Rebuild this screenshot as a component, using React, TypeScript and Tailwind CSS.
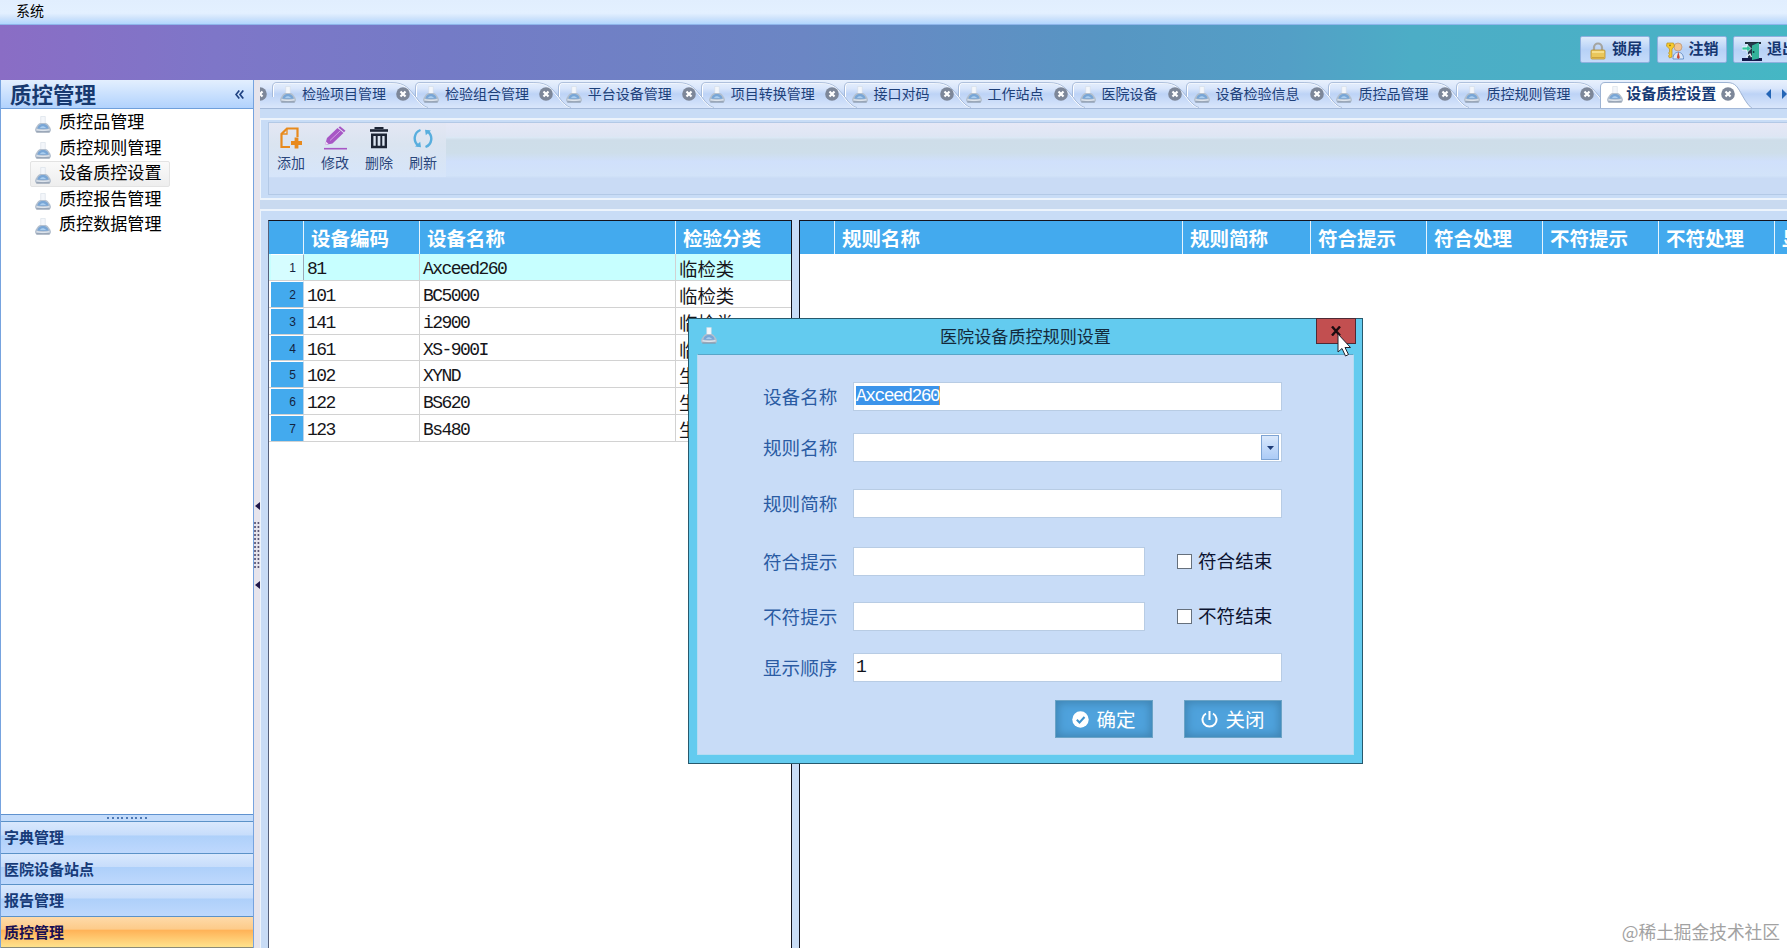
import { ReactNode, useState } from "react";

const menuItems = ["质控品管理", "质控规则管理", "设备质控设置", "质控报告管理", "质控数据管理"];

const groups = ["字典管理", "医院设备站点", "报告管理", "质控管理"];

const tabs = [
  { label: "检验项目管理", width: 142.9 },
  { label: "检验组合管理", width: 142.9 },
  { label: "平台设备管理", width: 142.9 },
  { label: "项目转换管理", width: 142.9 },
  { label: "接口对码", width: 114 },
  { label: "工作站点", width: 114 },
  { label: "医院设备", width: 114 },
  { label: "设备检验信息", width: 142.9 },
  { label: "质控品管理", width: 128 },
  { label: "质控规则管理", width: 142.9 },
];

const devices = [
  { code: "81", name: "Axceed260", type: "临检类" },
  { code: "101", name: "BC5000", type: "临检类" },
  { code: "141", name: "i2900", type: "临检类" },
  { code: "161", name: "XS-900I", type: "临检类" },
  { code: "102", name: "XYND", type: "生化类" },
  { code: "122", name: "BS620", type: "生化类" },
  { code: "123", name: "Bs480", type: "生化类" },
];

const FlaskIcon = ({ className = "" }: { className?: string }) => (
  <svg viewBox="0 0 16 17" className={`w-4 h-[17px] shrink-0 ${className}`}>
    <path d="M5.700 .5h4.600v7h-4.600z" fill="#f3f6fa" stroke="#cfd8e3" strokeWidth="0.500" />
    <path d="M5 7h6c2.500 1 4 4 4.800 6 .5 2-.5 3.300-2.300 3.300h-11C.7 16.300-.3 15 .2 13 1 11 2.500 8 5 7z" fill="#b3bfce" />
    <path d="M2.500 12.800c0-3 2.500-4.800 5.500-4.800s5.500 1.800 5.500 4.800z" fill="#79a6d6" />
    <path d="M5 12c1-2.500 4.500-2.500 6 0z" fill="#a9cdef" />
    <path d="M1.500 13.700c3 1 10 1 13 0" stroke="#dde4ec" strokeWidth="1.400" fill="none" />
    <path d="M1.300 16h13.400" stroke="#7f8da1" strokeWidth="1" />
  </svg>
);

const TabClose = () => (
  <svg viewBox="0 0 14 14" className="w-3.5 h-3.5 shrink-0">
    <circle cx="7" cy="7" r="6.800" fill="#7d8799" />
    <path d="M4.500 4.500l5 5M9.500 4.500l-5 5" stroke="#fff" strokeWidth="2.200" />
  </svg>
);

const Tab = ({ label, width, z }: { label: string; width: number; z: number }) => (
  <div className="relative flex items-start h-7 pl-2 shrink-0" style={{ width, zIndex: z }}>
    <svg className="absolute left-0 top-0 h-7 w-full overflow-visible" fill="none">
      <path
        d={`M1.500 17V7Q1.500 3 6 3H${width - 24}C${width - 10} 3 ${width - 7} 9 ${width} 17Q${width + 6} 26 ${width + 12} 27.500`}
        stroke="#fff"
      />
      <path
        d={`M.5 17V7Q.5 2.500 5 2.500H${width - 24}C${width - 9} 2.500 ${width - 6} 9 ${width + 1} 17Q${width + 7} 26 ${width + 13} 27.500`}
        stroke="#9db3d3"
        strokeWidth="0.800"
      />
    </svg>
    <FlaskIcon className="relative mt-[6px]" />
    <span className="relative ml-1.5 mt-[3px] text-[14px] leading-5 text-[#1d4079] whitespace-nowrap">{label}</span>
    <span className="relative ml-[10px] mt-[7px]">
      <TabClose />
    </span>
  </div>
);

const BannerButton = ({ icon, label }: { icon: ReactNode; label: string }) => (
  <button className="flex items-start w-[70px] h-[27px] shrink-0 pl-[8px] pt-[2px] gap-[5px] rounded-[2px] border border-[#8fb0df] bg-linear-to-b from-[#deebfb] via-[#b7d1f6] to-[#c5dbfa]">
    <span className="mt-[3px]">{icon}</span>
    <span className="text-[15px] leading-[18px] font-bold text-[#153670] whitespace-nowrap">{label}</span>
  </button>
);

const LockIcon = () => (
  <svg viewBox="0 0 18 18" className="w-[18px] h-[18px]">
    <path d="M5 9V5.500a4 4 0 0 1 8 0V9" stroke="#a5a5a0" strokeWidth="2.200" fill="none" />
    <rect x="2" y="8" width="14" height="9" rx="1" fill="#eac75c" stroke="#b68f33" strokeWidth="0.800" />
    <path d="M3 10h12" stroke="#fae69a" strokeWidth="1.500" />
    <path d="M3 15.500h12" stroke="#cfa23c" />
  </svg>
);

const KeyUserIcon = () => (
  <svg viewBox="0 0 18 18" className="w-[18px] h-[18px]">
    <circle cx="12" cy="5" r="4" fill="#f0c493" stroke="#bb9275" strokeWidth="0.700" />
    <path d="M7 17c-.5-9 11-9 10.500 0z" fill="#dce7f6" stroke="#6d95cc" strokeWidth="1" />
    <path d="M12.300 9.500l1.500 6-1.500 1.500-1.500-1.500z" fill="#cb4a35" />
    <path d="M1 1h6.500l1 3-2.500 3v8l-2.500 1-1-2 1-1.500-1-1.500 1-1V7L.5 4z" fill="#f6cb2c" stroke="#b88d21" strokeWidth="0.700" />
    <circle cx="4" cy="3.300" r="0.900" fill="#8e6b1a" />
  </svg>
);

const ExitIcon = () => (
  <svg viewBox="0 0 20 19" className="w-5 h-[19px]">
    <path d="M3 0h16v2H3z" fill="#1d2c3a" />
    <path d="M6 1h10v16H6z" fill="#23384a" />
    <path d="M0 16h20v3H0z" fill="#12194a" />
    <path d="M10 3.500l7-3v16l-7 1.500z" fill="#33b39a" />
    <path d="M0 5h5V2.500l4 4-4 4V8H0z" fill="#35c3a0" stroke="#fff" strokeWidth="0.700" />
    <path d="M4 15l4-3 1.500 3" stroke="#e8eef2" fill="none" strokeWidth="1.300" />
    <circle cx="11.600" cy="10" r="0.900" fill="#0e3a3c" />
  </svg>
);

const AddIcon = () => (
  <svg viewBox="0 0 22 22" className="w-[22px] h-[22px]" fill="none" stroke="#e88a1d" strokeWidth="2.200">
    <path d="M10 20H1.500V7L7 1.500h10.500V10" />
    <path d="M7 1.500V7H1.500" strokeWidth="1.300" />
    <path d="M16.500 10.500v11M11 16h11" strokeWidth="3.800" />
  </svg>
);

const EditIcon = () => (
  <svg viewBox="0 0 24 24" className="w-6 h-6">
    <path d="M2 19l2-7L14.500 2l6 5L9.500 17.500z" fill="#a757c5" />
    <path d="M15.500 1.500l1.500-1.300 5.500 4.500-1.500 1.500z" fill="#a757c5" />
    <path d="M7 14.500L17 5" stroke="#d7a7e6" strokeWidth="0.900" />
    <path d="M2 19l1-3.500 2.500 2.500z" fill="#f0e0f6" />
    <path d="M1 22.700h23" stroke="#a757c5" strokeWidth="1.600" />
  </svg>
);

const DeleteIcon = () => (
  <svg viewBox="0 0 20 22" className="w-5 h-[22px]" fill="none" stroke="#1c2434">
    <path d="M1 3.500h18" strokeWidth="2.600" />
    <path d="M6.500 2V1h7v1" strokeWidth="2" />
    <path d="M3.200 7.800h13.600V20H3.200z" strokeWidth="2.400" />
    <path d="M7.700 8v12M12.300 8v12" strokeWidth="1.900" />
  </svg>
);

const RefreshIcon = () => (
  <svg viewBox="0 0 20 21" className="w-5 h-[21px]" fill="none" stroke="#58aede" strokeWidth="2.400">
    <path d="M7.500 2C1 4.500-.5 13 5.500 17.800" />
    <path d="M12.500 19C19 16.500 20.500 8 14.500 3.200" />
    <path d="M2 18.500l6 .8-.8-5.500z" fill="#58aede" stroke="none" />
    <path d="M18 2.500l-6-.8.8 5.500z" fill="#58aede" stroke="none" />
  </svg>
);

const tools = [
  { label: "添加", icon: <AddIcon /> },
  { label: "修改", icon: <EditIcon /> },
  { label: "删除", icon: <DeleteIcon /> },
  { label: "刷新", icon: <RefreshIcon /> },
];

const HeadCell = ({ children, className = "" }: { children?: ReactNode; className?: string }) => (
  <div
    className={`h-[33px] pl-[7px] pt-px shrink-0 flex items-center border-r border-[#e6f4fd] text-white text-[19.500px] font-bold whitespace-nowrap overflow-hidden ${className}`}
  >
    {children}
  </div>
);

const Sidebar = () => (
  <aside className="w-[254px] shrink-0 flex flex-col border-l border-r border-[#76a3df] bg-white">
    <div className="h-[29px] flex items-start justify-between pl-[9px] pr-[9px] border-b border-[#6f9fdb] bg-linear-to-b from-[#e3effe] to-[#b1d2fd]">
      <span className="text-[21.500px] leading-[27px] font-bold text-[#17396f]">质控管理</span>
      <svg viewBox="0 0 9 9" className="mt-[10px] w-[9px] h-[9px]" fill="none" stroke="#1f4282" strokeWidth="1.700">
        <path d="M4.300 .5L1 4.500l3.300 4M8.300 .5L5 4.500l3.300 4" />
      </svg>
    </div>
    <ul className="flex-1 pt-px">
      {menuItems.map((item, i) => (
        <li key={item} className="h-[25.600px] pl-[29px]">
          <div
            className={`flex items-start h-[26px] w-[140px] pl-1 border ${
              i === 2 ? "border-[#e3e3e3] bg-linear-to-b from-[#fafafa] to-[#eeeeee] rounded-[2px]" : "border-transparent"
            }`}
          >
            <FlaskIcon className="mt-[5px]" />
            <span className="ml-[8px] text-[17.100px] leading-5 whitespace-nowrap text-black">{item}</span>
          </div>
        </li>
      ))}
    </ul>
    <div className="h-[7px] flex items-center justify-center gap-[2.700px] border-t border-[#5f92cf] bg-[#c4dcfb]">
      {Array.from({ length: 9 }, (_, i) => (
        <span key={i} className="w-0.5 h-0.5 bg-[#4d78b4]" />
      ))}
    </div>
    {groups.map((group, i) => (
      <div
        key={group}
        className={`h-[31.400px] pl-[3px] border-t border-[#5b92c8] text-[15px] leading-[30px] font-bold ${
          i === 3
            ? "text-[#190f52] bg-[linear-gradient(#fedaa9_0%,#fdcb8a_40%,#ffb358_45%,#ffe28c_100%)]"
            : "text-[#173b78] bg-[linear-gradient(#d9e8fd_0%,#c7ddfb_42%,#aed0fa_45%,#bed8fd_100%)]"
        }`}
      >
        {group}
      </div>
    ))}
    <div className="h-px bg-[#8a8a78]" />
  </aside>
);

const Splitter = () => (
  <div className="w-[7px] -mr-px shrink-0 flex flex-col items-center justify-center gap-3 pt-[63px] bg-[#e6e4ec] border-r border-white">
    <svg viewBox="0 0 5 8" className="w-[5px] h-2">
      <path d="M5 0v8L0 4z" fill="#20184a" />
    </svg>
    <div className="w-[7px] h-[47px] bg-[radial-gradient(circle_at_1px_1px,#4a4668_0.700px,transparent_0.900px)] bg-size-[3.500px_4px]" />
    <svg viewBox="0 0 5 8" className="w-[5px] h-2">
      <path d="M5 0v8L0 4z" fill="#20184a" />
    </svg>
  </div>
);

const TabBar = () => (
  <div className="h-[29px] flex overflow-hidden border-b border-[#a3b8d8] bg-[linear-gradient(#e9f1fd_0%,#d9e6fb_30%,#bdd3f6_50%,#d9e6fb_100%)]">
    <div className="w-[12px] shrink-0 flex justify-end pr-[5px] pt-[7px] overflow-hidden">
      <TabClose />
    </div>
    {tabs.map((tab, i) => (
      <Tab key={tab.label} label={tab.label} width={tab.width} z={20 - i} />
    ))}
    <div className="relative z-30 flex items-start h-7 w-[154px] ml-px pl-[7px] shrink-0">
      <svg className="absolute left-0 top-0 h-[29px] w-full overflow-visible">
        <path d="M.5 29V7Q.5 2.500 5 2.500H127C136 2.500 138 8 142 15Q148 26 153 29" fill="#fff" stroke="#9db3d3" />
      </svg>
      <FlaskIcon className="relative mt-[6px]" />
      <span className="relative ml-[3px] mt-[3px] text-[15px] leading-5 font-bold text-[#163a75] whitespace-nowrap">
        设备质控设置
      </span>
      <span className="relative ml-[5px] mt-[7px]">
        <TabClose />
      </span>
    </div>
    <div className="flex items-center gap-[11px] pl-3 shrink-0">
      <svg viewBox="0 0 5 10" className="w-[5px] h-2.5">
        <path d="M5 0v10L0 5z" fill="#2465b5" />
      </svg>
      <svg viewBox="0 0 5 10" className="w-[5px] h-2.5">
        <path d="M0 0v10l5-5z" fill="#2465b5" />
      </svg>
    </div>
  </div>
);

const Toolbar = () => (
  <div className="h-[82px] pt-[2px] pl-[7px] border-t-2 border-b-2 border-l border-[#edf4fc] bg-[#c8dcf6]">
    <div className="h-[73px] flex border border-r-0 border-[#b3c9e6] bg-[linear-gradient(#e6e8f6_0%,#dee6f4_19%,#dce9f6_20%,#cedde9_24%,#cedeea_42%,#d0e0fb_54%,#d2e3f9_74%,#c9dbf5_78%,#c9dbf5_100%)]">
      <div className="flex h-[54px] pt-[3px] w-[177px] bg-[linear-gradient(#e4e7f4,#dae4f0_40%,#d6e5fa)]">
        {tools.map((tool) => (
          <button key={tool.label} className="w-11 flex flex-col items-center shrink-0">
            <span className="h-6 flex items-center">{tool.icon}</span>
            <span className="mt-[2px] text-[14px] leading-5 text-[#2a467b]">{tool.label}</span>
          </button>
        ))}
      </div>
    </div>
  </div>
);

const DeviceTable = () => (
  <div className="w-[524px] shrink-0 border border-b-0 border-[#14141e] border-l-[#55607a] bg-white">
    <div className="flex bg-[#43aaee]">
      <HeadCell className="w-[35px]" />
      <HeadCell className="w-[116px]">设备编码</HeadCell>
      <HeadCell className="w-[256px]">设备名称</HeadCell>
      <HeadCell className="w-[115px] border-r-0">检验分类</HeadCell>
    </div>
    {devices.map((device, i) => (
      <div
        key={device.code}
        className={`flex h-[26.850px] border-b border-[#d2d2d2] text-[18px] tracking-[-1.550px] leading-[31px] text-[#16161a] ${
          i === 0 ? "bg-[#c7ffff]" : "bg-white"
        }`}
      >
        <div
          className={`w-[33px] ml-0.5 pr-[7px] shrink-0 border-r border-t text-right font-['Liberation_Sans',sans-serif] text-[12px] tracking-normal leading-[27px] text-[#13233f] ${
            i === 0 ? "border-r-[#9aa8b8] border-t-white bg-[#d6fdff]" : "border-r-[#bcd4ea] border-t-white bg-[#43aaee]"
          }`}
        >
          {i + 1}
        </div>
        <div className="w-[116px] pl-[3px] shrink-0 border-r border-[#d2d2d2] font-['Liberation_Mono',monospace]">{device.code}</div>
        <div className="w-[256px] pl-[3px] shrink-0 border-r border-[#d2d2d2] font-['Liberation_Mono',monospace]">{device.name}</div>
        <div className="pl-[3px] text-[18.400px] tracking-normal leading-[28px]">{device.type}</div>
      </div>
    ))}
  </div>
);

const RuleTable = () => (
  <div className="flex-1 min-w-0 border border-b-0 border-r-0 border-[#14141e] bg-white">
    <div className="flex overflow-hidden bg-[#43aaee]">
      <HeadCell className="w-[35px]" />
      <HeadCell className="w-[348px]">规则名称</HeadCell>
      <HeadCell className="w-[128px]">规则简称</HeadCell>
      <HeadCell className="w-[116px]">符合提示</HeadCell>
      <HeadCell className="w-[116px]">符合处理</HeadCell>
      <HeadCell className="w-[116px]">不符提示</HeadCell>
      <HeadCell className="w-[116px]">不符处理</HeadCell>
      <HeadCell className="w-[116px]">显示顺序</HeadCell>
    </div>
  </div>
);

const inputClass = "h-[29px] border border-[#b8cce4] bg-white outline-none pl-[2px] pb-0.5 font-['Liberation_Mono',monospace] text-[18px] tracking-[-1.550px] text-[#10131c]";

const FieldRow = ({ label, className, children }: { label: string; className: string; children: ReactNode }) => (
  <div className={`flex items-center h-[29px] ${className}`}>
    <span className="w-[90px] shrink-0 text-[18.600px] leading-[27px] pb-0.5 text-[#2a5ba3] whitespace-nowrap">{label}</span>
    {children}
  </div>
);

const Checkbox = ({ label }: { label: string }) => {
  const [checked, setChecked] = useState(false);
  return (
    <label className="ml-8 flex items-center gap-[6px] text-[18.600px] text-[#0c1330] leading-[28px] whitespace-nowrap">
      <input
        type="checkbox"
        checked={checked}
        onChange={() => setChecked(!checked)}
        className="appearance-none w-[15px] h-[15px] border border-[#66707c] bg-white checked:bg-[#43aaee]"
      />
      <span className="pb-[3px]">{label}</span>
    </label>
  );
};

const DialogButton = ({ icon, label }: { icon: ReactNode; label: string }) => (
  <button className="w-[98px] h-[38px] flex items-center justify-center gap-[7px] border border-[#6ba3c6] bg-[#4fa2dc] shadow-[inset_0_0_9px_2px_#3f84b2] text-white text-[19.500px] leading-[30px] whitespace-nowrap">
    {icon}
    {label}
  </button>
);

const RuleDialog = () => (
  <div className="absolute left-[688px] top-[318px] z-40 w-[675px] h-[446px] flex flex-col border border-[#27596d] bg-[#63cbef] px-2 pb-2">
    <div className="relative h-[35px] shrink-0 flex items-center justify-center pb-0.5">
      <FlaskIcon className="absolute left-1 top-2" />
      <span className="text-[17.100px] leading-6 text-[#132a3c]">医院设备质控规则设置</span>
      <button className="absolute right-[-2px] top-[-1px] w-10 h-[26px] flex items-center justify-center border border-[#4d2a35] bg-[#c24f50]">
        <svg viewBox="0 0 10 10" className="w-2.5 h-2.5" stroke="#1b0c10" strokeWidth="2.400">
          <path d="M1 .5l8 9M9 .5l-8 9" />
        </svg>
      </button>
    </div>
    <div className="flex-1 pl-[65px] pt-[27px] border border-[#b4dcf2] border-t-[#58a6c8] bg-[#c8dcf7]">
      <FieldRow label="设备名称" className="">
        <div className={`w-[429px] ${inputClass}`}>
          <span className="inline-block h-[19px] mt-[3px] leading-[21px] align-top bg-[#3c94ea] text-white border-r border-[#d99a4e]">
            Axceed260
          </span>
        </div>
      </FieldRow>
      <FieldRow label="规则名称" className="mt-[22px]">
        <div className={`w-[429px] flex justify-end p-0.5 !pb-0.5 ${inputClass}`}>
          <span className="w-[18px] h-[25px] -mt-px flex items-center justify-center border border-[#7ea4d4] bg-linear-to-b from-[#d9e8fc] to-[#accbf6]">
            <svg viewBox="0 0 7 4" className="w-[7px] h-1">
              <path d="M0 0h7L3.500 4z" fill="#1f3d78" />
            </svg>
          </span>
        </div>
      </FieldRow>
      <FieldRow label="规则简称" className="mt-[27px]">
        <input className={`w-[429px] ${inputClass}`} />
      </FieldRow>
      <FieldRow label="符合提示" className="mt-[29px]">
        <input className={`w-[292px] ${inputClass}`} />
        <Checkbox label="符合结束" />
      </FieldRow>
      <FieldRow label="不符提示" className="mt-[26px]">
        <input className={`w-[292px] ${inputClass}`} />
        <Checkbox label="不符结束" />
      </FieldRow>
      <FieldRow label="显示顺序" className="mt-[22px]">
        <input className={`w-[429px] ${inputClass}`} defaultValue="1" />
      </FieldRow>
      <div className="mt-[18px] flex gap-[31px] pl-[292px]">
        <DialogButton
          label="确定"
          icon={
            <svg viewBox="0 0 17 17" className="w-[17px] h-[17px]">
              <circle cx="8.500" cy="8.500" r="8.200" fill="#fff" />
              <path d="M4.800 8.800l2.700 2.700 5-5.500" stroke="#3f93cd" strokeWidth="2" fill="none" />
            </svg>
          }
        />
        <DialogButton
          label="关闭"
          icon={
            <svg viewBox="0 0 17 17" className="w-[17px] h-[17px]" fill="none" stroke="#fff" strokeWidth="2">
              <path d="M5 2.500a7 7 0 1 0 7 0M8.500 0v9" />
            </svg>
          }
        />
      </div>
    </div>
  </div>
);

export default function App() {
  return (
    <div className="relative w-[1787px] h-[948px] overflow-hidden flex flex-col bg-[#c8dcf6] font-['Noto_Sans_CJK_SC',sans-serif]">
      {/* Menu bar */}
      <div className="h-[25px] shrink-0 pl-4 border-b border-[#8eb5ea] bg-[linear-gradient(#e1eefe_0%,#e3f0ff_55%,#cfe3fb_75%,#b1d6fe_100%)] text-[14px] leading-[21px] text-black">
        系统
      </div>

      {/* Banner */}
      <div className="h-[55px] shrink-0 flex pt-[11px] pl-[1580px] gap-[6.500px] overflow-hidden bg-[linear-gradient(90deg,#8a6dc5_0%,#7e76c8_12%,#747bc6_25%,#6b86c4_45%,#5796c3_62%,#539fc6_72%,#4cadc6_79%,#4ab1c6_93%,#45b7c4_100%)]">
        <BannerButton icon={<LockIcon />} label="锁屏" />
        <BannerButton icon={<KeyUserIcon />} label="注销" />
        <BannerButton icon={<ExitIcon />} label="退出" />
      </div>

      <div className="flex flex-1 min-h-0">
        <Sidebar />
        <Splitter />
        <main className="flex-1 min-w-0 flex flex-col bg-[#c8dcf6]">
          <TabBar />
          <div className="h-[9px] shrink-0" />
          <Toolbar />
          <div className="h-[9px] shrink-0 bg-[#c9daf0]" />
          <div className="flex flex-1 min-h-0 pl-[7px] pt-[9px] gap-[7px] border-t-2 border-l border-[#edf4fc]">
            <DeviceTable />
            <RuleTable />
          </div>
        </main>
      </div>

      <RuleDialog />

      {/* Mouse pointer */}
      <svg viewBox="0 0 15 24" className="absolute z-50 left-[1337px] top-[333px] w-[15px] h-6">
        <path d="M1 1v18l4-3.500 3.500 7.500 3-1.500L8 14.500h5.500z" fill="#fff" stroke="#22222e" />
      </svg>

      <div className="absolute right-[7px] bottom-[5px] text-[17.700px] leading-6 text-[#a2a2a2] whitespace-nowrap">@稀土掘金技术社区</div>
    </div>
  );
}
